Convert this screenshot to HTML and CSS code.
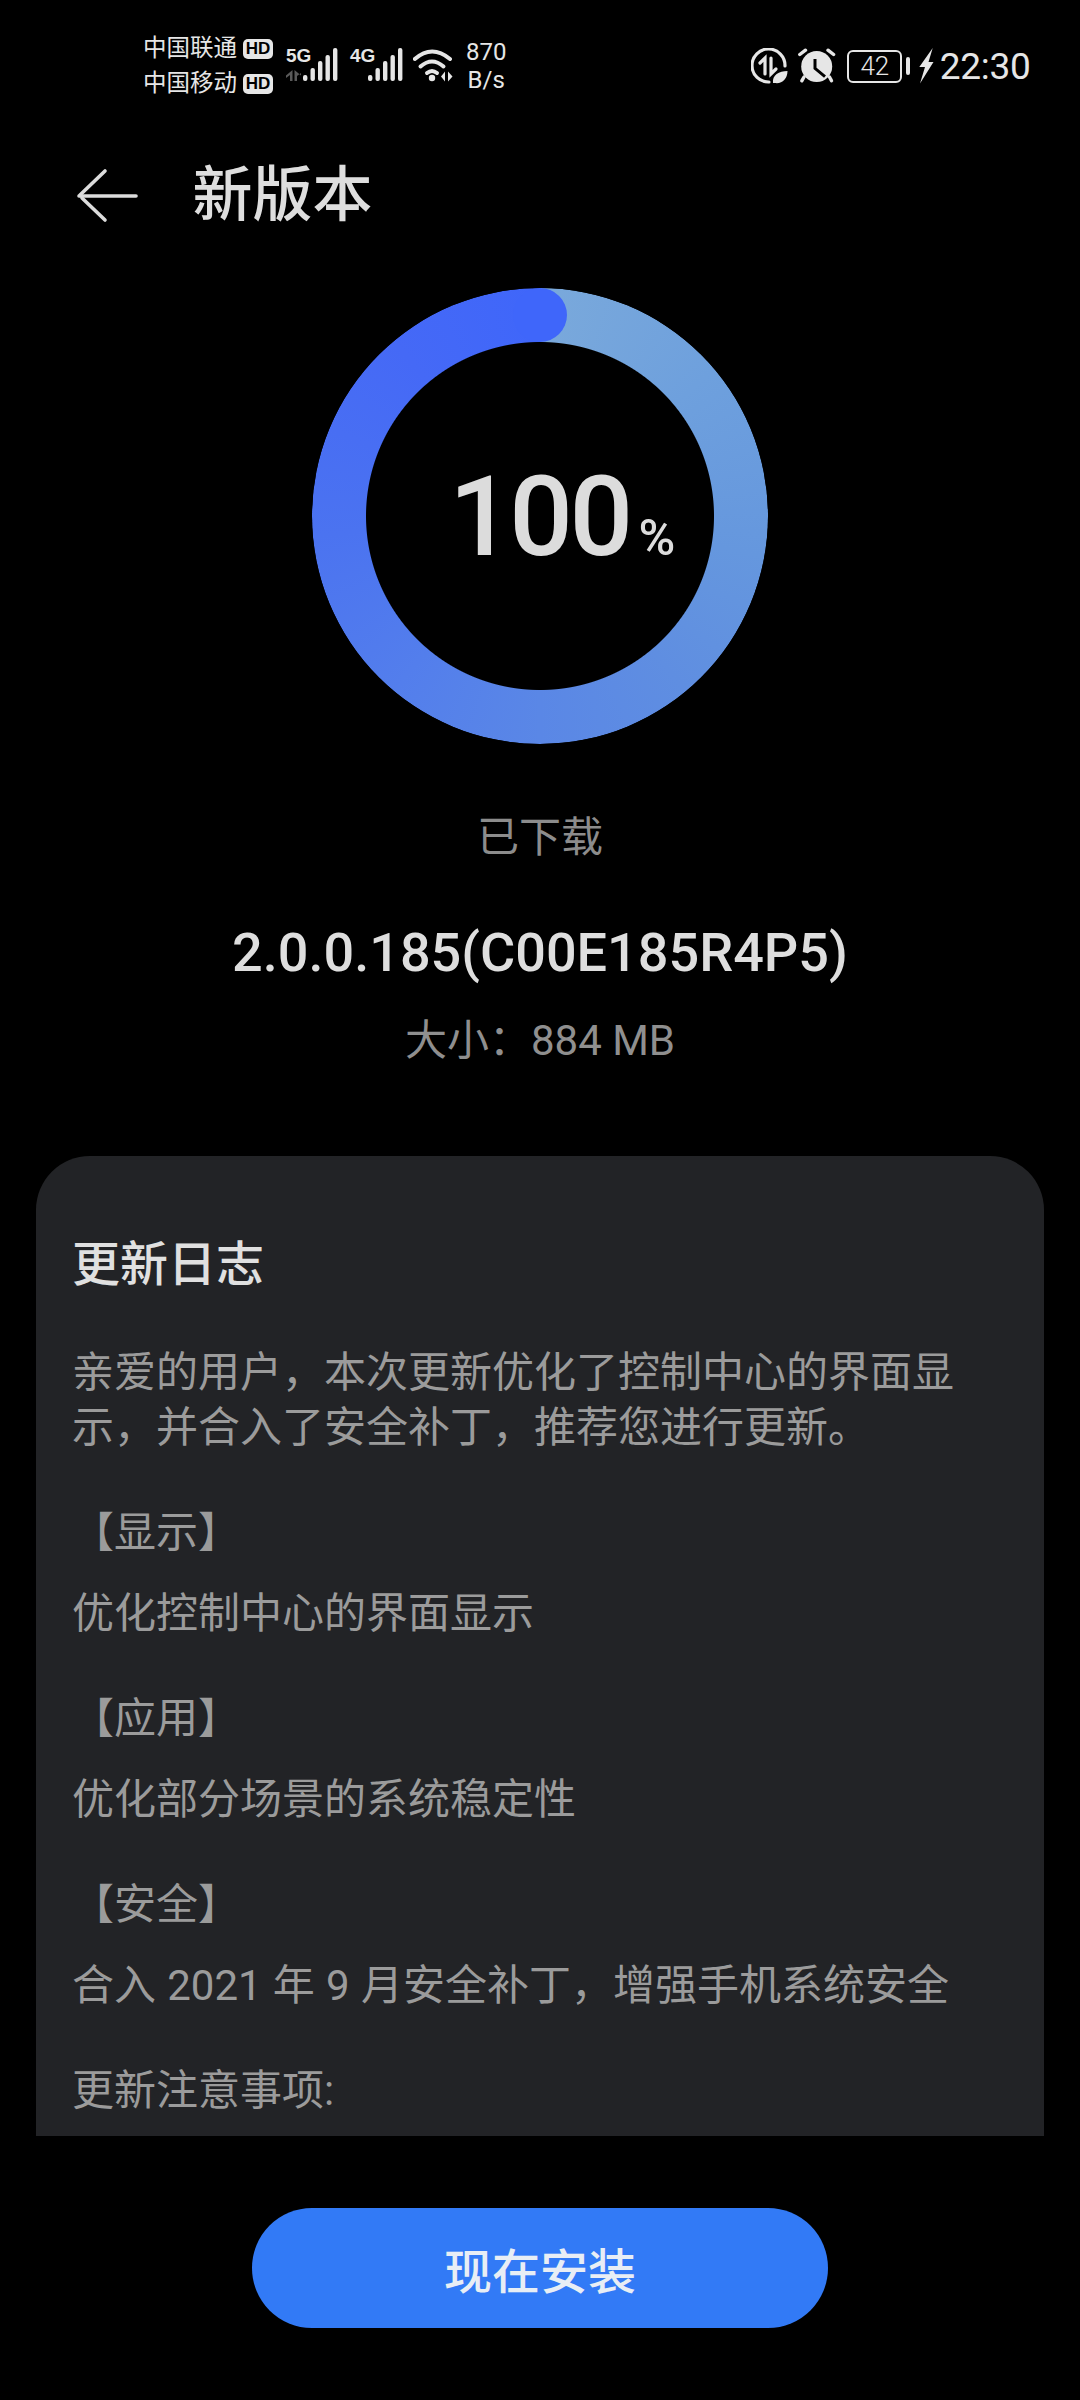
FILE: index.html
```html
<!DOCTYPE html>
<html lang="zh-CN">
<head>
<meta charset="utf-8">
<title>新版本</title>
<link rel="stylesheet" href="styles.css">
</head>
<body>
<div class="status">
  <div class="carriers">
    <div class="carrier"><span class="carrier-name">中国联通</span><span class="hd">HD</span></div>
    <div class="carrier"><span class="carrier-name">中国移动</span><span class="hd">HD</span></div>
  </div>
  <div class="sig sig-first">
    <div class="sig-label">
      <span class="gen">5G</span>
      <svg class="sig-arrows" width="15" height="11" viewBox="0 0 15 11"><path d="M6.500 0V11H4V5L0 8V5.500Z M8.500 0V11H11V6L15 3V5.500Z"/></svg>
    </div>
    <svg class="bars" width="35" height="33" viewBox="0 0 35 33"><rect x="0" y="27" width="4.400" height="6" rx="2"/><rect x="7.500" y="20" width="4.400" height="13" rx="2"/><rect x="15" y="13" width="4.400" height="20" rx="2"/><rect x="22.500" y="7" width="4.400" height="26" rx="2"/><rect x="30" y="0" width="4.400" height="33" rx="2"/></svg>
  </div>
  <div class="sig sig-second">
    <div class="sig-label"><span class="gen">4G</span></div>
    <svg class="bars" width="35" height="33" viewBox="0 0 35 33"><rect x="0" y="27" width="4.400" height="6" rx="2"/><rect x="7.500" y="20" width="4.400" height="13" rx="2"/><rect x="15" y="13" width="4.400" height="20" rx="2"/><rect x="22.500" y="7" width="4.400" height="26" rx="2"/><rect x="30" y="0" width="4.400" height="33" rx="2"/></svg>
  </div>
  <svg class="wifi" width="40" height="34" viewBox="0 0 40 34"><g fill="none" stroke="#e6e6e6" stroke-width="4" stroke-linecap="round"><path d="M1.800 11Q19 -4 37 11"/><path d="M7.500 18.500Q19 8.500 30.500 18.500"/><path d="M14 25Q19 21 24 25"/></g><circle cx="19" cy="30" r="3.200" fill="#e6e6e6"/><path d="M32 23.500V33.500L28 28.500Z M35 23.500V33.500L39.500 28.500Z" fill="#e6e6e6"/></svg>
  <div class="speed"><span>870</span><span>B/s</span></div>
  <div class="status-right">
    <svg class="ic-saver" width="37" height="37" viewBox="0 0 37 37"><g fill="none" stroke="#e6e6e6" stroke-width="3.200" stroke-linecap="round"><path d="M34 18A16.500 16.500 0 1 0 18 34"/><path d="M14 26V10L9 15"/><path d="M20 10V26L25 21"/></g><path d="M22 35C21 27 28 23 36.500 23C36.500 31 31 36 24 35Z" fill="#e6e6e6"/></svg>
    <svg class="ic-alarm" width="38" height="36" viewBox="0 0 38 36"><circle cx="18.700" cy="18.500" r="15.500" fill="#e6e6e6"/><g fill="none" stroke="#e6e6e6" stroke-width="3.400" stroke-linecap="round"><path d="M1.800 6.500L7.500 2.200"/><path d="M35.600 6.500L30 2.200"/><path d="M6 29L3.800 32.800"/><path d="M31.500 29L33.500 32.800"/></g><path d="M17 11V20.300L27 28.700" fill="none" stroke="#000" stroke-width="3"/></svg>
    <div class="battery"><span class="battery-level">42</span></div>
    <span class="battery-nub"></span>
    <svg class="ic-bolt" width="15" height="36" viewBox="0 0 15 36"><path d="M13.700 0L0.300 19H6L1 35.500L14.500 14H9.500Z" fill="#e6e6e6"/></svg>
    <span class="time">22:30</span>
  </div>
</div>

<header class="topbar">
  <svg class="back" width="64" height="56" viewBox="0 0 64 56"><g fill="none" stroke="#dcdcdc" stroke-width="3.600" stroke-linecap="round"><path d="M3 28H60"/><path d="M29 3L4 27"/><path d="M6 30L29 52"/></g></svg>
  <h1 class="title">新版本</h1>
</header>

<div class="ring">
  <div class="ring-track"></div>
  <div class="ring-value"><span class="num">100</span><span class="unit">%</span></div>
</div>

<p class="state">已下载</p>
<p class="version">2.0.0.185(C00E185R4P5)</p>
<p class="size">大小：884 MB</p>

<section class="card">
  <h2 class="log-title">更新日志</h2>
  <p class="intro">亲爱的用户，本次更新优化了控制中心的界面显示，并合入了安全补丁，推荐您进行更新。</p>
  <p class="head">【显示】</p>
  <p class="item">优化控制中心的界面显示</p>
  <p class="head">【应用】</p>
  <p class="item">优化部分场景的系统稳定性</p>
  <p class="head">【安全】</p>
  <p class="item">合入 2021 年 9 月安全补丁，增强手机系统安全</p>
  <p class="head">更新注意事项:</p>
</section>

<button class="install">现在安装</button>
</body>
</html>
```

FILE: styles.css
```css
* { box-sizing: border-box; }
html, body { margin: 0; padding: 0; }
body {
  width: 1080px;
  height: 2400px;
  overflow: hidden;
  background: #000;
  color: #e0e0e0;
  font-family: Roboto, "Noto Sans CJK SC", sans-serif;
}
p, h1, h2 { margin: 0; font-weight: 400; }

.status {
  display: flex;
  align-items: center;
  height: 70px;
  margin-top: 31px;
  padding-left: 143px;
  color: #e6e6e6;
}
.carriers { display: flex; flex-direction: column; }
.carrier { display: flex; align-items: center; height: 35px; gap: 6px; }
.carrier-name { font-size: 23.500px; line-height: 35px; white-space: nowrap; }
.hd {
  width: 30px;
  height: 20px;
  border-radius: 5px;
  background: #e6e6e6;
  color: #000;
  font-size: 17px;
  line-height: 20px;
  font-weight: 700;
  text-align: center;
  font-family: "Liberation Sans Narrow", "Liberation Sans", sans-serif;
}
.sig { display: flex; align-items: flex-end; height: 33px; margin-bottom: 3px; }
.sig-first { margin-left: 13px; }
.sig-second { margin-left: 12px; }
.sig-label { display: flex; flex-direction: column; justify-content: space-between; height: 33px; width: 17px; }
.sig-second .sig-label { width: 18px; }
.gen {
  font-family: "Liberation Sans Narrow", "Liberation Sans", sans-serif;
  font-weight: 700;
  font-size: 19px;
  line-height: 15px;
  white-space: nowrap;
}
.sig-arrows { fill: #5a5a5a; }
.bars { fill: #e6e6e6; flex: none; }
.wifi { margin-left: 10px; margin-bottom: 2px; flex: none; }
.speed {
  display: flex;
  flex-direction: column;
  align-items: center;
  margin-left: 13px;
  font-size: 24px;
  line-height: 28px;
  letter-spacing: 0;
  font-weight: 400;
}
.status-right {
  display: flex;
  align-items: center;
  margin-left: auto;
  padding-right: 49.500px;
}
.ic-saver { flex: none; }
.ic-alarm { margin-left: 10px; flex: none; }
.battery {
  width: 55px;
  height: 33px;
  margin-left: 11px;
  border: 2.500px solid #e6e6e6;
  border-radius: 6px;
  display: flex;
  align-items: center;
  justify-content: center;
}
.battery-level { font-size: 26px; font-weight: 300; line-height: 28px; }
.battery-nub {
  width: 4px;
  height: 18px;
  margin-left: 4px;
  border-radius: 2px;
  background: #e6e6e6;
}
.ic-bolt { margin-left: 9px; flex: none; }
.time { margin-left: 5.500px; padding-top: 2px; font-size: 37px; line-height: 44px; letter-spacing: -0.300px; font-weight: 400; }

.topbar {
  display: flex;
  align-items: center;
  height: 80px;
  margin-top: 55px;
  padding-left: 76px;
}
.back { flex: none; }
.title {
  margin-left: 52.500px;
  font-size: 60px;
  line-height: 80px;
  font-weight: 500;
  color: #dedede;
}

.ring {
  position: relative;
  width: 456px;
  height: 456px;
  margin: 52px auto 0;
}
.ring-track {
  position: absolute;
  inset: 0;
  border-radius: 50%;
  background: conic-gradient(from 0deg, #7aa9db 0deg, #6ea0dd 50deg, #6597de 100deg, #5f8ee1 140deg, #5a87e6 180deg, #537eec 220deg, #4b73f0 265deg, #4569f6 320deg, #3f66fa 360deg);
  -webkit-mask: radial-gradient(closest-side, transparent 173.500px, #000 174.500px);
  mask: radial-gradient(closest-side, transparent 173.500px, #000 174.500px);
}
.ring-track::after {
  content: "";
  position: absolute;
  left: 201px;
  top: 0;
  width: 54px;
  height: 54px;
  border-radius: 50%;
  background: #3f66fa;
}
.ring-value {
  position: absolute;
  inset: 0;
  display: flex;
  align-items: baseline;
  justify-content: center;
  padding-left: 44.500px;
  padding-top: 159px;
  color: #dcdcdc;
  font-weight: 500;
}
.num { font-size: 112px; line-height: 140px; letter-spacing: -3.500px; }
.unit { font-size: 50px; margin-left: 9px; }

.state { margin-top: 66px; font-size: 42px; line-height: 56px; text-align: center; color: #8c8c8c; }
.version { margin-top: 55px; font-size: 54px; line-height: 64px; text-align: center; color: #dedede; font-weight: 500; }
.size { margin-top: 28px; font-size: 42px; line-height: 56px; text-align: center; color: #8f8f8f; }

.card {
  height: 980px;
  margin: 87px 36px 0;
  padding: 76px 36px 0;
  border-radius: 54px 54px 0 0;
  background: #222326;
  overflow: hidden;
}
.log-title { font-size: 48px; line-height: 66px; font-weight: 500; color: #e0e0e0; }
.intro, .head, .item { font-size: 42px; line-height: 55px; color: #9b9b9b; }
.intro { margin-top: 46.500px; }
.head { margin-top: 50.500px; }
.item { margin-top: 25.500px; word-spacing: 0.800px; }

.install {
  display: block;
  width: 576px;
  height: 120px;
  margin: 72px auto 0;
  padding-bottom: 2px;
  border: 0;
  border-radius: 60px;
  background: #327af6;
  color: #e8eef5;
  font-family: inherit;
  font-size: 48px;
  font-weight: 500;
}
```
